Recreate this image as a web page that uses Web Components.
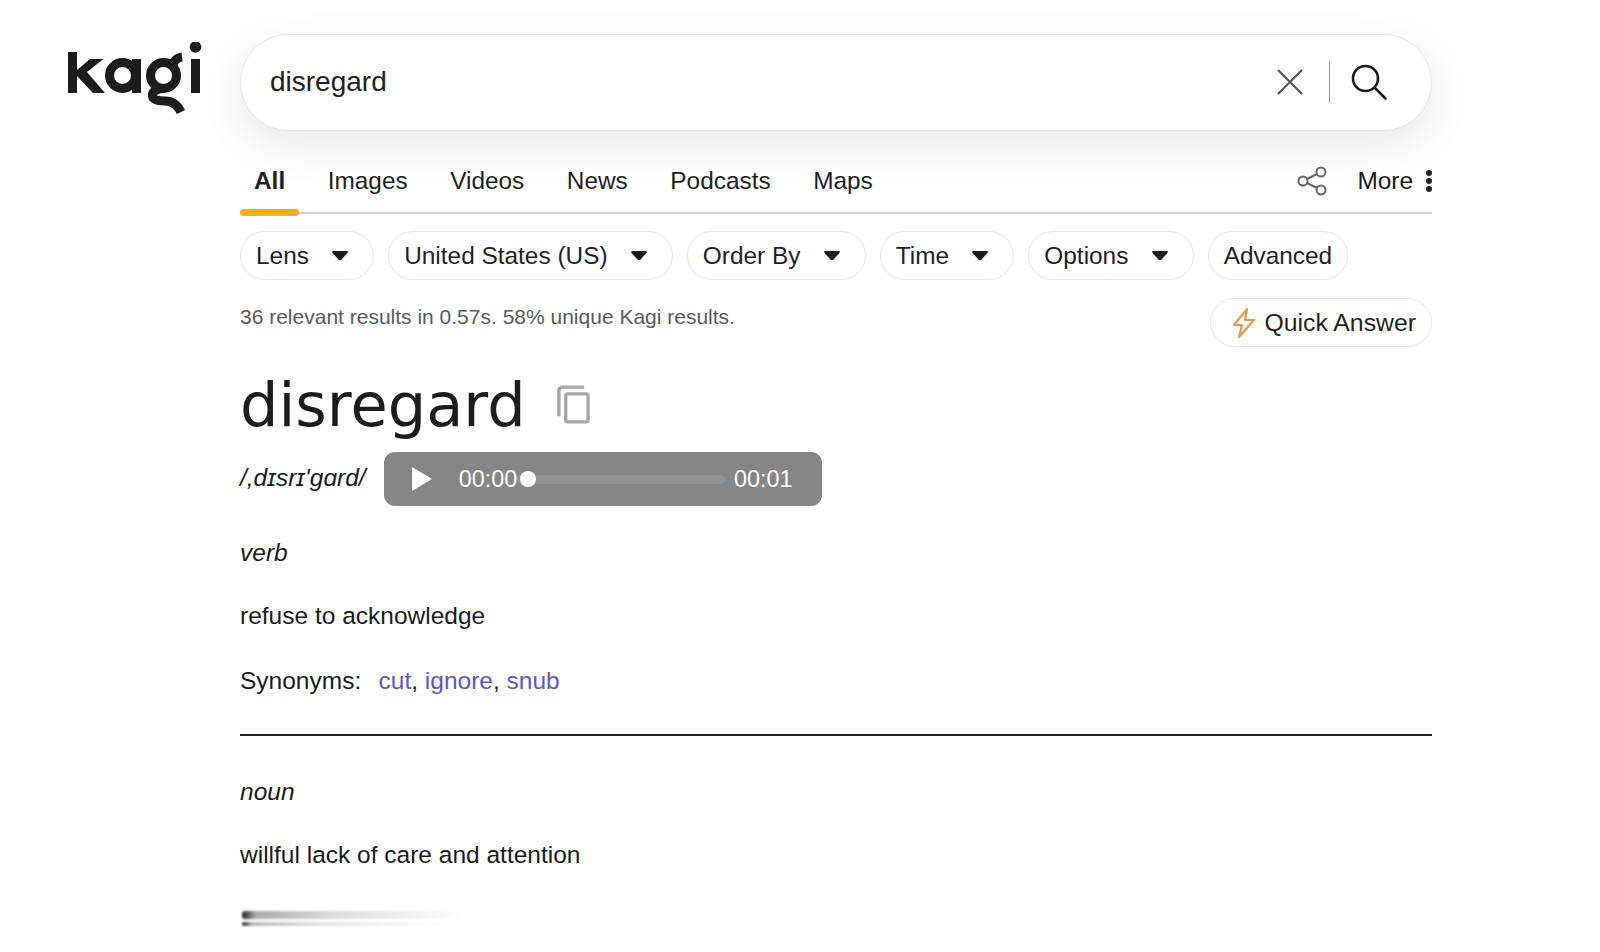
<!DOCTYPE html>
<html lang="en">
<head>
<meta charset="utf-8">
<title>disregard - Kagi Search</title>
<style>
    html, body { margin: 0; height: 100%; background: #fff; overflow: hidden; }
    body { font-family: "Liberation Sans", Arial, sans-serif; color: #1a1a1a; }
</style>
</head>
<body>
<kagi-page>
    <kagi-logo slot="logo"></kagi-logo>
    <kagi-search value="disregard"></kagi-search>
    <kagi-tabs></kagi-tabs>
    <kagi-filters></kagi-filters>
    <kagi-stats>36 relevant results in 0.57s. 58% unique Kagi results.</kagi-stats>
    <kagi-dictionary></kagi-dictionary>
</kagi-page>

<script>
function define(name, html, init) {
    customElements.define(name, class extends HTMLElement {
        constructor() {
            super();
            this.attachShadow({ mode: "open" });
            this.shadowRoot.innerHTML = html;
            if (init) init(this);
        }
    });
}

define("kagi-page", `
<style>
    :host { display: grid; grid-template-columns: 240px 1192px; padding-top: 34px; }
    .logo { padding: 8px 0 0 68px; }
    main { display: flex; flex-direction: column; }
</style>
<div class="logo"><slot name="logo"></slot></div>
<main><slot></slot></main>`);

define("kagi-logo", `
<style>
    :host { display: block; width: 134px; height: 72px; }
    svg { display: block; }
</style>
<svg width="134" height="72" viewBox="0 0 134 72" fill="none" stroke="#1c1c1e" stroke-width="9">
    <path d="M0 10H9V28L22 17H35.500L19 30L37 51H25L9 34V51H0Z" fill="#1c1c1e" stroke="none"/>
    <circle cx="54.500" cy="33.500" r="13"/>
    <path d="M68.500 17V51"/>
    <circle cx="95.500" cy="33.500" r="13"/>
    <path d="M104 24C106 18 109 15.500 114 15"/>
    <path d="M95.500 46.500C88 46.500 84 50 84.500 54C85 58 90 59 97 59C104 59 109 62 113 70"/>
    <path d="M123 17H132V51H123Z" fill="#1c1c1e" stroke="none"/>
    <circle cx="127.500" cy="5" r="5.800" fill="#1c1c1e" stroke="none"/>
</svg>`);

define("kagi-search", `
<style>
    :host { display: flex; align-items: center; height: 97px; box-sizing: border-box; padding: 0 44px 2px 29px;
        border: 1px solid #e6e6e6; border-radius: 49px; background: #fff;
        box-shadow: 0 14px 44px rgba(0,0,0,.09); font-size: 28px; color: #222; }
    span { flex: 1; }
    .bar { width: 1px; height: 42px; background: #999; margin: 0 21px 0 25px; }
    svg { display: block; }
</style>
<span></span>
<svg width="28" height="28" viewBox="0 0 28 28" stroke="#555" stroke-width="2.200" fill="none"><path d="M2 2L26 26M26 2L2 26"/></svg>
<div class="bar"></div>
<svg width="36" height="36" viewBox="0 0 36 36" stroke="#1a1a1a" stroke-width="2.600" fill="none" stroke-linecap="round"><circle cx="14.500" cy="14.500" r="12.500"/><path d="M24 24L34.500 34.500"/></svg>`,
    el => { el.shadowRoot.querySelector("span").textContent = el.getAttribute("value"); });

define("kagi-tabs", `
<style>
    :host { display: flex; align-items: center; height: 83px; box-sizing: border-box; padding-top: 18px; border-bottom: 2px solid #d2d2d2;
        font-size: 24.400px; position: relative; }
    a { margin-left: 14px; margin-right: 28.500px; color: #1f1f1f; }
    a.on { font-weight: 700; }
    .mark { position: absolute; left: 0; bottom: -4px; width: 59px; height: 7px; border-radius: 4px; background: #fbb024; }
    .right { margin-left: auto; display: flex; align-items: center; }
    svg { display: block; }
    .more { margin: 0 13px 0 30px; }
</style>
<a class="on">All</a><a>Images</a><a>Videos</a><a>News</a><a>Podcasts</a><a>Maps</a>
<div class="right">
    <svg width="30" height="30" viewBox="0 0 30 30" fill="none" stroke="#666" stroke-width="2"><circle cx="6" cy="15" r="4.500"/><circle cx="24" cy="6" r="4.500"/><circle cx="24" cy="24" r="4.500"/><path d="M10 13L20 8M10 17L20 22"/></svg>
    <span class="more">More</span>
    <svg width="6" height="24" viewBox="0 0 6 24" fill="#222"><circle cx="3" cy="4" r="3"/><circle cx="3" cy="12" r="3"/><circle cx="3" cy="20" r="3"/></svg>
</div>
<div class="mark"></div>`);

define("kagi-chip", `
<style>
    :host { display: inline-flex; align-items: center; height: 49px; box-sizing: border-box; padding: 0 15px;
        border: 1px solid #e4e4e4; border-radius: 25px; background: #fff; font-size: 24.400px; color: #1f1f1f; white-space: nowrap; }
    :host([menu]) { padding-right: 25px; }
    svg { display: none; margin: 0 0 0 23.300px; }
    :host([menu]) svg { display: block; }
</style>
<slot></slot>
<svg width="16" height="9.500" viewBox="0 0 18 11" fill="#1a1a1a"><path d="M1.500 0H16.500C18 0 18.500 1.500 17.500 2.500L10.500 10C9.500 11 8.500 11 7.500 10L.5 2.500C-.5 1.500 0 0 1.500 0Z"/></svg>`);

define("kagi-filters", `
<style>
    :host { display: flex; gap: 14px; padding-top: 17px; }
</style>
<kagi-chip menu>Lens</kagi-chip>
<kagi-chip menu>United States (US)</kagi-chip>
<kagi-chip menu>Order By</kagi-chip>
<kagi-chip menu>Time</kagi-chip>
<kagi-chip menu>Options</kagi-chip>
<kagi-chip>Advanced</kagi-chip>`);

define("kagi-stats", `
<style>
    :host { display: flex; justify-content: space-between; align-items: flex-start; padding-top: 18px; font-size: 21px; color: #5a5a5a; }
    .t { padding-top: 7px; }
    kagi-chip { font-size: 24.800px; padding-left: 21px; }
    svg { display: block; margin-right: 8px; }
</style>
<div class="t"><slot></slot></div>
<kagi-chip><svg width="24" height="30" viewBox="0 0 24 30" fill="none" stroke="#e99a4f" stroke-width="2.200" stroke-linejoin="round"><path d="M15 1L2 17H10L7 29L22 12H13Z"/></svg>Quick Answer</kagi-chip>`);

define("kagi-audio", `
<style>
    :host { display: flex; align-items: center; width: 438px; height: 54px; box-sizing: border-box; padding: 0 29px 0 27px;
        border-radius: 11px; background: #868686; color: #fff; font-size: 23.400px; font-style: normal; }
    svg { display: block; margin-right: 27px; }
    .track { flex: 1; height: 9px; background: #919191; border-radius: 5px; margin: 0 9px 0 0; position: relative; }
    .dot { position: absolute; left: 2.500px; top: -4px; width: 16px; height: 16px; border-radius: 50%; background: #fff; }
</style>
<svg width="21" height="24" viewBox="0 0 21 24" fill="#fff"><path d="M1 0L21 12L1 24Z"/></svg>
<span>00:00</span>
<div class="track"><div class="dot"></div></div>
<span>00:01</span>`);

define("kagi-dictionary", `
<style>
    :host { display: block; font-size: 24.500px; color: #1a1a1a; margin-top: 12px; }
    .head { display: flex; align-items: center; gap: 31px; }
    h1 { margin: 0; padding-top: 2px; font: 400 60.600px/88px "DejaVu Sans", sans-serif; color: #1c1c1c; }
    .phon { display: flex; align-items: center; gap: 18px; font-style: italic; margin-top: 3px; }
    .phon span { padding-bottom: 2px; }
    p { margin: 0; }
    .pos { font-style: italic; margin-top: 33px; line-height: 28px; }
    .def { margin-top: 35px; line-height: 28px; }
    .syn { margin-top: 37px; line-height: 28px; }
    .syn a { color: #5f56c4; }
    .syn b { font-weight: 400; margin-right: 10.500px; }
    hr { border: 0; height: 2px; background: #222; margin: 39px 0 0; }
    hr + .pos { margin-top: 42px; }
    .fade { margin: 42px 0 0 2px; width: 222px; display: flex; flex-direction: column; gap: 3px; filter: blur(.8px); }
    .fade i { display: block; border-radius: 3px 0 0 3px; }
    .fade i:first-child { height: 8px; background: linear-gradient(90deg, #222, #aaa 6%, #ddd 40%, #fff 100%); }
    .fade i:last-child { height: 4px; width: 90%; background: linear-gradient(90deg, #222, #bbb 5%, #e4e4e4 40%, #fff 100%); }
    svg { display: block; }
</style>
<div class="head">
    <h1>disregard</h1>
    <svg width="33" height="39" viewBox="0 0 34 40" fill="none" stroke="#a6a6a6" stroke-width="3.400"><path d="M2 32V6C2 3 3.500 2 6 2H28"/><rect x="9" y="9" width="23" height="29" rx="2"/></svg>
</div>
<div class="phon"><span>/,dɪsrɪ'ɡɑrd/</span><kagi-audio></kagi-audio></div>
<p class="pos">verb</p>
<p class="def">refuse to acknowledge</p>
<p class="syn"><b>Synonyms:</b> <a>cut</a>, <a>ignore</a>, <a>snub</a></p>
<hr>
<p class="pos">noun</p>
<p class="def">willful lack of care and attention</p>
<div class="fade"><i></i><i></i></div>`);
</script>
</body>
</html>
